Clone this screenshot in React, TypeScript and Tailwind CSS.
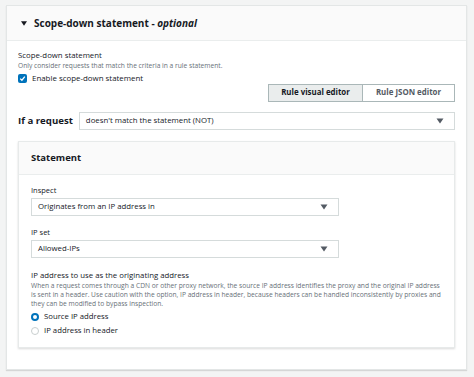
const font = { fontFamily: '"Open Sans", "Noto Sans", Arial, sans-serif' }

function Caret() {
  return (
    <svg width="8" height="6" viewBox="0 0 8 6" className="shrink-0">
      <path d="M0.5 0.5 H7.5 L4 5.5 Z" fill="#545b64" />
    </svg>
  )
}

function Select({ value, className = '' }: { value: string; className?: string }) {
  return (
    <div
      className={`flex h-[18px] items-center justify-between border border-[#d5dbdb] bg-white pl-[6px] pr-[10px] text-[7.8px] text-[#16191f] ${className}`}
    >
      <span>{value}</span>
      <Caret />
    </div>
  )
}

function Radio({ checked, label }: { checked: boolean; label: string }) {
  return (
    <div className="flex h-[14px] items-center gap-[5px]">
      {checked ? (
        <span className="h-[8px] w-[8px] rounded-full border-[2.5px] border-[#0073bb] bg-white" />
      ) : (
        <span className="h-[8px] w-[8px] rounded-full border border-[#c9cfcf] bg-white" />
      )}
      <span className="text-[7.75px] text-[#16191f]">{label}</span>
    </div>
  )
}

export default function App() {
  return (
    <div style={font} className="h-[377px] w-[474px] bg-[#f3f4f4] pt-[5px] pr-[7px] pl-[6px]">
      <div className="flex h-[365px] flex-col border border-[#e3e6e6] bg-white shadow-[0_1px_1px_rgba(0,0,0,0.12)]">
        <div className="flex h-[35px] shrink-0 items-center gap-[7px] border-b border-[#eaeded] bg-[#fafafa] pl-[14px]">
          <svg width="6" height="5" viewBox="0 0 6 5">
            <path d="M0 0.3 H6 L3 4.7 Z" fill="#16191f" />
          </svg>
          <span className="text-[10px] font-bold text-[#16191f]">
            Scope-down statement - <i>optional</i>
          </span>
        </div>

        <div className="flex flex-col px-[11px] pt-[8px]">
          <span className="text-[7.8px] leading-[12px] text-[#16191f]">Scope-down statement</span>
          <span className="text-[6.67px] leading-[9px] text-[#687078]">
            Only consider requests that match the criteria in a rule statement.
          </span>
          <label className="mt-[2px] flex h-[13px] items-center gap-[5px]">
            <span className="flex h-[9px] w-[9px] items-center justify-center rounded-[2px] bg-[#0073bb]">
              <svg width="7" height="7" viewBox="0 0 7 7">
                <path d="M1.2 3.6 L2.9 5.2 L5.8 1.6" stroke="white" strokeWidth="1.3" fill="none" />
              </svg>
            </span>
            <span className="text-[7.9px] text-[#16191f]">Enable scope-down statement</span>
          </label>

          <div className="mt-[-1px] flex justify-end">
            <div className="flex h-[18px] border border-[#aab7b8] text-[7.9px] font-bold">
              <span className="flex w-[93px] items-center justify-center bg-[#eaeded] text-[#16191f]">
                Rule visual editor
              </span>
              <span className="flex w-[92px] items-center justify-center border-l border-[#aab7b8] bg-white text-[#545b64]">
                Rule JSON editor
              </span>
            </div>
          </div>

          <div className="mt-[10px] flex items-center gap-[6px]">
            <span className="text-[9.65px] font-bold text-[#16191f]">If a request</span>
            <Select value="doesn't match the statement (NOT)" className="flex-1" />
          </div>

          <div className="mt-[11px] flex h-[207px] flex-col border border-[#e7eaea] bg-white shadow-[0_1px_2px_rgba(0,0,0,0.15)]">
            <div className="flex h-[33px] shrink-0 items-center border-b border-[#eaeded] bg-[#fafafa] pl-[12px]">
              <span className="text-[9.5px] font-bold text-[#16191f]">Statement</span>
            </div>
            <div className="flex flex-col pl-[12px] pr-[9px] pt-[9px]">
              <span className="text-[7.5px] leading-[12px] text-[#16191f]">Inspect</span>
              <Select value="Originates from an IP address in" className="mt-[2px] w-[308px]" />
              <span className="mt-[10px] text-[7.5px] leading-[12px] text-[#16191f]">IP set</span>
              <Select value="Allowed-IPs" className="mt-[2px] w-[308px]" />

              <span className="mt-[12px] text-[7.8px] leading-[11px] text-[#16191f]">
                IP address to use as the originating address
              </span>
              <p className="text-[6.67px] leading-[9px] text-[#687078]">
                When a request comes through a CDN or other proxy network, the source IP address identifies the proxy and the original IP address is sent in a header. Use caution with the option, IP address in header, because headers can be handled inconsistently by proxies and they can be modified to bypass inspection.
              </p>
              <div className="mt-[2px] flex flex-col">
                <Radio checked label="Source IP address" />
                <Radio checked={false} label="IP address in header" />
              </div>
            </div>
          </div>
        </div>
      </div>
    </div>
  )
}
